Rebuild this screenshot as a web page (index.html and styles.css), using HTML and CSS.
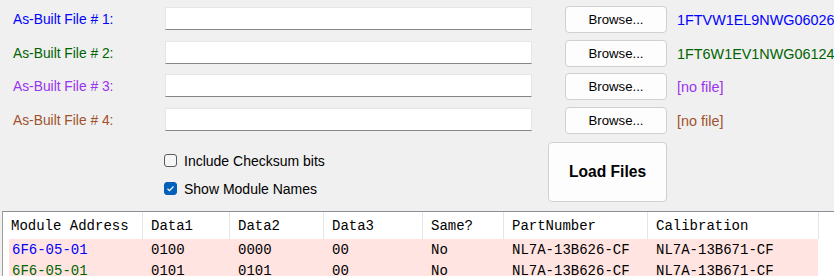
FILE: index.html
```html
<!DOCTYPE html>
<html>
<head>
<meta charset="utf-8">
<link rel="stylesheet" href="styles.css">
</head>
<body>
<div class="files">
  <div class="frow">
    <span class="lbl c1">As-Built File # 1:</span>
    <span class="tbox"></span>
    <span class="btn">Browse...</span>
    <span class="res c1">1FTVW1EL9NWG06026</span>
  </div>
  <div class="frow">
    <span class="lbl c2">As-Built File # 2:</span>
    <span class="tbox"></span>
    <span class="btn">Browse...</span>
    <span class="res c2">1FT6W1EV1NWG06124</span>
  </div>
  <div class="frow">
    <span class="lbl c3">As-Built File # 3:</span>
    <span class="tbox"></span>
    <span class="btn">Browse...</span>
    <span class="res c3">[no file]</span>
  </div>
  <div class="frow">
    <span class="lbl c4">As-Built File # 4:</span>
    <span class="tbox"></span>
    <span class="btn">Browse...</span>
    <span class="res c4">[no file]</span>
  </div>
</div>
<div class="opts">
  <div class="checks">
    <div class="chk"><span class="box"></span><span>Include Checksum bits</span></div>
    <div class="chk"><span class="box on"><svg width="13" height="13" viewBox="0 0 13 13"><path d="M3.5 6.8 L5.5 8.7 L9.5 4.5" fill="none" stroke="#fff" stroke-width="1.2"/></svg></span><span>Show Module Names</span></div>
  </div>
  <div class="load">Load Files</div>
</div>
<div class="table">
  <div class="thead">
    <div class="th">Module Address</div>
    <div class="th">Data1</div>
    <div class="th">Data2</div>
    <div class="th">Data3</div>
    <div class="th">Same?</div>
    <div class="th">PartNumber</div>
    <div class="th">Calibration</div>
  </div>
  <div class="tr">
    <div class="td c1">6F6-05-01</div>
    <div class="td">0100</div>
    <div class="td">0000</div>
    <div class="td">00</div>
    <div class="td">No</div>
    <div class="td">NL7A-13B626-CF</div>
    <div class="td">NL7A-13B671-CF</div>
  </div>
  <div class="tr">
    <div class="td c2">6F6-05-01</div>
    <div class="td">0101</div>
    <div class="td">0101</div>
    <div class="td">00</div>
    <div class="td">No</div>
    <div class="td">NL7A-13B626-CF</div>
    <div class="td">NL7A-13B671-CF</div>
  </div>
</div>
</body>
</html>
```

FILE: styles.css
```css
html, body {
  margin: 0;
  padding: 0;
  background: #f0f0f0;
  width: 834px;
  height: 276px;
  overflow: hidden;
  font-family: "Liberation Sans", Arial, sans-serif;
  font-size: 13.8px;
  color: #000;
}
.c1 { color: #0000ff; }
.c2 { color: #006400; }
.c3 { color: #9933ee; }
.c4 { color: #a0522d; }

.files {
  padding-top: 6px;
  display: flex;
  flex-direction: column;
}
.frow {
  display: flex;
  align-items: center;
  height: 27px;
  white-space: nowrap;
}
.frow + .frow { margin-top: 7px; }
.frow:nth-child(3) { margin-top: 6px; }
.lbl {
  width: 152px;
  padding-left: 13px;
  flex: none;
}
.tbox {
  flex: none;
  width: 365px;
  height: 21px;
  background: #fff;
  border: 1px solid #e6e6e6;
  border-bottom: 1px solid #868686;
  margin-top: -3px;
}
.btn {
  flex: none;
  margin-left: 33px;
  width: 100px;
  height: 25px;
  border: 1px solid #d0d0d0;
  border-radius: 4px;
  background: #fdfdfd;
  display: flex;
  align-items: center;
  justify-content: center;
  font-size: 13.2px;
}
.res {
  margin-left: 10px;
  font-size: 14.4px;
}

.opts {
  display: flex;
  margin-top: 8px;
  height: 63px;
}
.checks {
  width: 384px;
  padding-left: 164px;
  padding-top: 12px;
  display: flex;
  flex-direction: column;
  gap: 15px;
}
.chk {
  display: flex;
  align-items: center;
  gap: 7px;
  height: 13px;
  font-size: 14px;
}
.box {
  width: 11px;
  height: 11px;
  border: 1px solid #5c5c5c;
  border-radius: 3px;
  background: #f6f6f6;
  position: relative;
}
.box.on {
  background: #005fb8;
  border-color: #005fb8;
}
.box svg { position: absolute; left: -1px; top: -1px; }
.load {
  width: 117px;
  height: 58px;
  border: 1px solid #d0d0d0;
  border-radius: 4px;
  background: #fdfdfd;
  display: flex;
  align-items: center;
  justify-content: center;
  font-weight: bold;
  font-size: 15.6px;
}

.table {
  margin-left: 2px;
  margin-top: 6px;
  border-top: 1px solid #8c8c94;
  border-left: 1px solid #a0a0a0;
  background: #fff;
  height: 64px;
  overflow: hidden;
  font-family: "Liberation Mono", "Courier New", monospace;
  font-size: 14px;
  white-space: nowrap;
}
.thead {
  display: grid;
  grid-template-columns: 140px 87px 94px 99px 81px 144px 171px;
  height: 27px;
}
.th {
  border-right: 1px solid #e5e5e5;
  padding-left: 8px;
  display: flex;
  align-items: center;
}
.tr {
  display: grid;
  grid-template-columns: 134px 87px 94px 99px 81px 144px 170px;
  margin-left: 6px;
  width: 809px;
  height: 21px;
  background: #ffe4e1;
}
.td {
  padding-left: 8px;
  display: flex;
  align-items: center;
}
.tr .td:first-child { padding-left: 3px; }
```
